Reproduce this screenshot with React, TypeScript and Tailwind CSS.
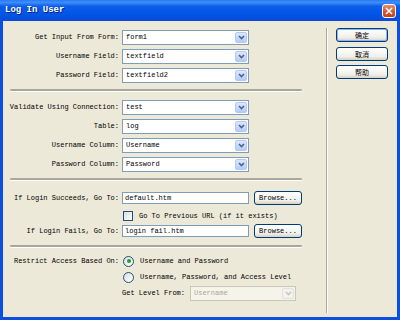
import React from 'react';

function Chevron({ color }: { color: string }) {
  return (
    <svg width="7" height="5" viewBox="0 0 7 5">
      <path d="M1 1 L3.5 3.5 L6 1" fill="none" stroke={color} strokeWidth="1.6" />
    </svg>
  );
}

function Select({
  value,
  disabled,
  className = '',
}: {
  value: string;
  disabled?: boolean;
  className?: string;
}) {
  return (
    <div
      className={`flex h-[15px] items-stretch border p-px ${
        disabled
          ? 'border-[#C9C7BA] bg-[#F5F4EA] text-[#ACA899]'
          : 'border-[#7F9DB9] bg-white text-black'
      } ${className}`}
    >
      <span className="flex flex-1 items-center pl-[2px]">{value}</span>
      <span
        className={`flex w-[12px] items-center justify-center rounded-[2px] ${
          disabled
            ? 'bg-[#F3F2EC] border border-[#E3E1D9]'
            : 'bg-[linear-gradient(180deg,#DCE7FE,#B6CBF8)] border border-[#B4C8F6]'
        }`}
      >
        <Chevron color={disabled ? '#C9C7BA' : '#4D6185'} />
      </span>
    </div>
  );
}

function XpButton({
  children,
  def,
  className = '',
}: {
  children: React.ReactNode;
  def?: boolean;
  className?: string;
}) {
  return (
    <div
      className={`flex items-center justify-center rounded-[3px] border border-[#003C74] bg-[linear-gradient(180deg,#FFFFFF,#F0F0EA_70%,#D6D0C5)] ${
        def ? 'shadow-[inset_0_0_0_1px_#8CB4F2]' : ''
      } ${className}`}
    >
      {children}
    </div>
  );
}

function Sep() {
  return (
    <div className="ml-[7px] h-[2px] w-[292px] rounded-full bg-[#A9A79B] shadow-[0_1px_0_#FFFFFF]" />
  );
}

function Label({ children }: { children: React.ReactNode }) {
  return <span className="flex items-center justify-end whitespace-pre">{children}</span>;
}

function Radio({ checked }: { checked?: boolean }) {
  return (
    <span className="flex h-[11px] w-[11px] items-center justify-center rounded-full border border-[#1C5180] bg-[linear-gradient(135deg,#DCDCD7,#FFFFFF)]">
      {checked && <span className="h-[4px] w-[4px] rounded-full bg-[#21A121]" />}
    </span>
  );
}

export default function App() {
  return (
    <div className="flex h-[320px] w-[400px] flex-col bg-[#0A4FDF] text-[7px] leading-none text-black font-['Liberation_Mono',monospace]">
      {/* Title bar */}
      <div className="flex h-[21px] items-center justify-between bg-[linear-gradient(180deg,#2A7BF5_0%,#3D8EF8_12%,#0C5DEA_30%,#0055E5_70%,#0A4AD8_100%)] pl-[5px] pr-[4px]">
        <span className="text-[9px] font-bold text-white [text-shadow:1px_1px_0_#0A1F80]">
          Log In User
        </span>
        <span className="flex h-[14px] w-[14px] items-center justify-center rounded-[3px] border border-white bg-[linear-gradient(180deg,#E98C6E,#D6532F_60%,#C4401C)]">
          <svg width="8" height="8" viewBox="0 0 8 8">
            <path d="M1 1 L7 7 M7 1 L1 7" stroke="#FFFFFF" strokeWidth="1.6" />
          </svg>
        </span>
      </div>

      {/* Body */}
      <div className="mx-[3px] mb-[3px] flex flex-1 bg-[#ECE9D8]">
        {/* Left panel */}
        <div className="flex w-[323px] flex-col">
          <div className="mt-[9px] grid grid-cols-[116px_127px] gap-x-[3px] gap-y-[4px] [&>*]:h-[15px]">
            <Label>Get Input From Form:</Label>
            <Select value="form1" />
            <Label>Username Field:</Label>
            <Select value="textfield" />
            <Label>Password Field:</Label>
            <Select value="textfield2" />
          </div>

          <div className="mt-[6px]">
            <Sep />
          </div>

          <div className="mt-[9px] grid grid-cols-[116px_127px] gap-x-[3px] gap-y-[4px] [&>*]:h-[15px]">
            <Label>Validate Using Connection:</Label>
            <Select value="test" />
            <Label>Table:</Label>
            <Select value="log" />
            <Label>Username Column:</Label>
            <Select value="Username" />
            <Label>Password Column:</Label>
            <Select value="Password" />
          </div>

          <div className="mt-[6px]">
            <Sep />
          </div>

          <div className="mt-[11px] flex flex-col">
            <div className="grid h-[14px] grid-cols-[116px_127px_auto] gap-x-[3px]">
              <Label>If Login Succeeds, Go To:</Label>
              <div className="my-px flex items-center border border-[#7F9DB9] bg-white pl-[2px]">
                default.htm
              </div>
              <XpButton className="ml-[2px] w-[48px]">Browse...</XpButton>
            </div>
            <div className="mt-[4px] grid h-[14px] grid-cols-[116px_auto] gap-x-[3px]">
              <span />
              <div className="flex items-center gap-[6px] pl-[1px]">
                <span className="h-[10px] w-[10px] border border-[#1C5180] bg-[linear-gradient(135deg,#DCDCD7,#FFFFFF)]" />
                <span>Go To Previous URL (if it exists)</span>
              </div>
            </div>
            <div className="mt-px grid h-[14px] grid-cols-[116px_127px_auto] gap-x-[3px]">
              <Label>If Login Fails, Go To:</Label>
              <div className="my-px flex items-center border border-[#7F9DB9] bg-white pl-[2px]">
                login fail.htm
              </div>
              <XpButton className="ml-[2px] w-[48px]">Browse...</XpButton>
            </div>
          </div>

          <div className="mt-[7px]">
            <Sep />
          </div>

          <div className="mt-[7px] flex flex-col">
            <div className="grid h-[14px] grid-cols-[116px_auto] gap-x-[3px]">
              <Label>Restrict Access Based On:</Label>
              <div className="flex items-center gap-[6px] pl-px">
                <Radio checked />
                <span>Username and Password</span>
              </div>
            </div>
            <div className="mt-[2px] grid h-[14px] grid-cols-[116px_auto] gap-x-[3px]">
              <span />
              <div className="flex items-center gap-[6px] pl-px">
                <Radio />
                <span>Username, Password, and Access Level</span>
              </div>
            </div>
            <div className="mt-[2px] grid h-[15px] grid-cols-[116px_auto] gap-x-[3px]">
              <span />
              <div className="flex items-center">
                <span>Get Level From:</span>
                <Select value="Username" disabled className="ml-[5px] w-[106px]" />
              </div>
            </div>
          </div>
        </div>

        {/* Vertical separator */}
        <div className="mb-[4px] mt-[7px] w-[2px] border-l border-r border-l-[#ACA899] border-r-white" />

        {/* Right panel */}
        <div className="ml-[8px] mt-[7px] flex flex-col font-['Noto_Sans_CJK_SC',sans-serif] text-[7px]">
          <XpButton def className="h-[14px] w-[52px]">确定</XpButton>
          <XpButton className="mt-[5px] h-[14px] w-[52px]">取消</XpButton>
          <XpButton className="mt-[4px] h-[14px] w-[52px]">帮助</XpButton>
        </div>
      </div>
    </div>
  );
}
